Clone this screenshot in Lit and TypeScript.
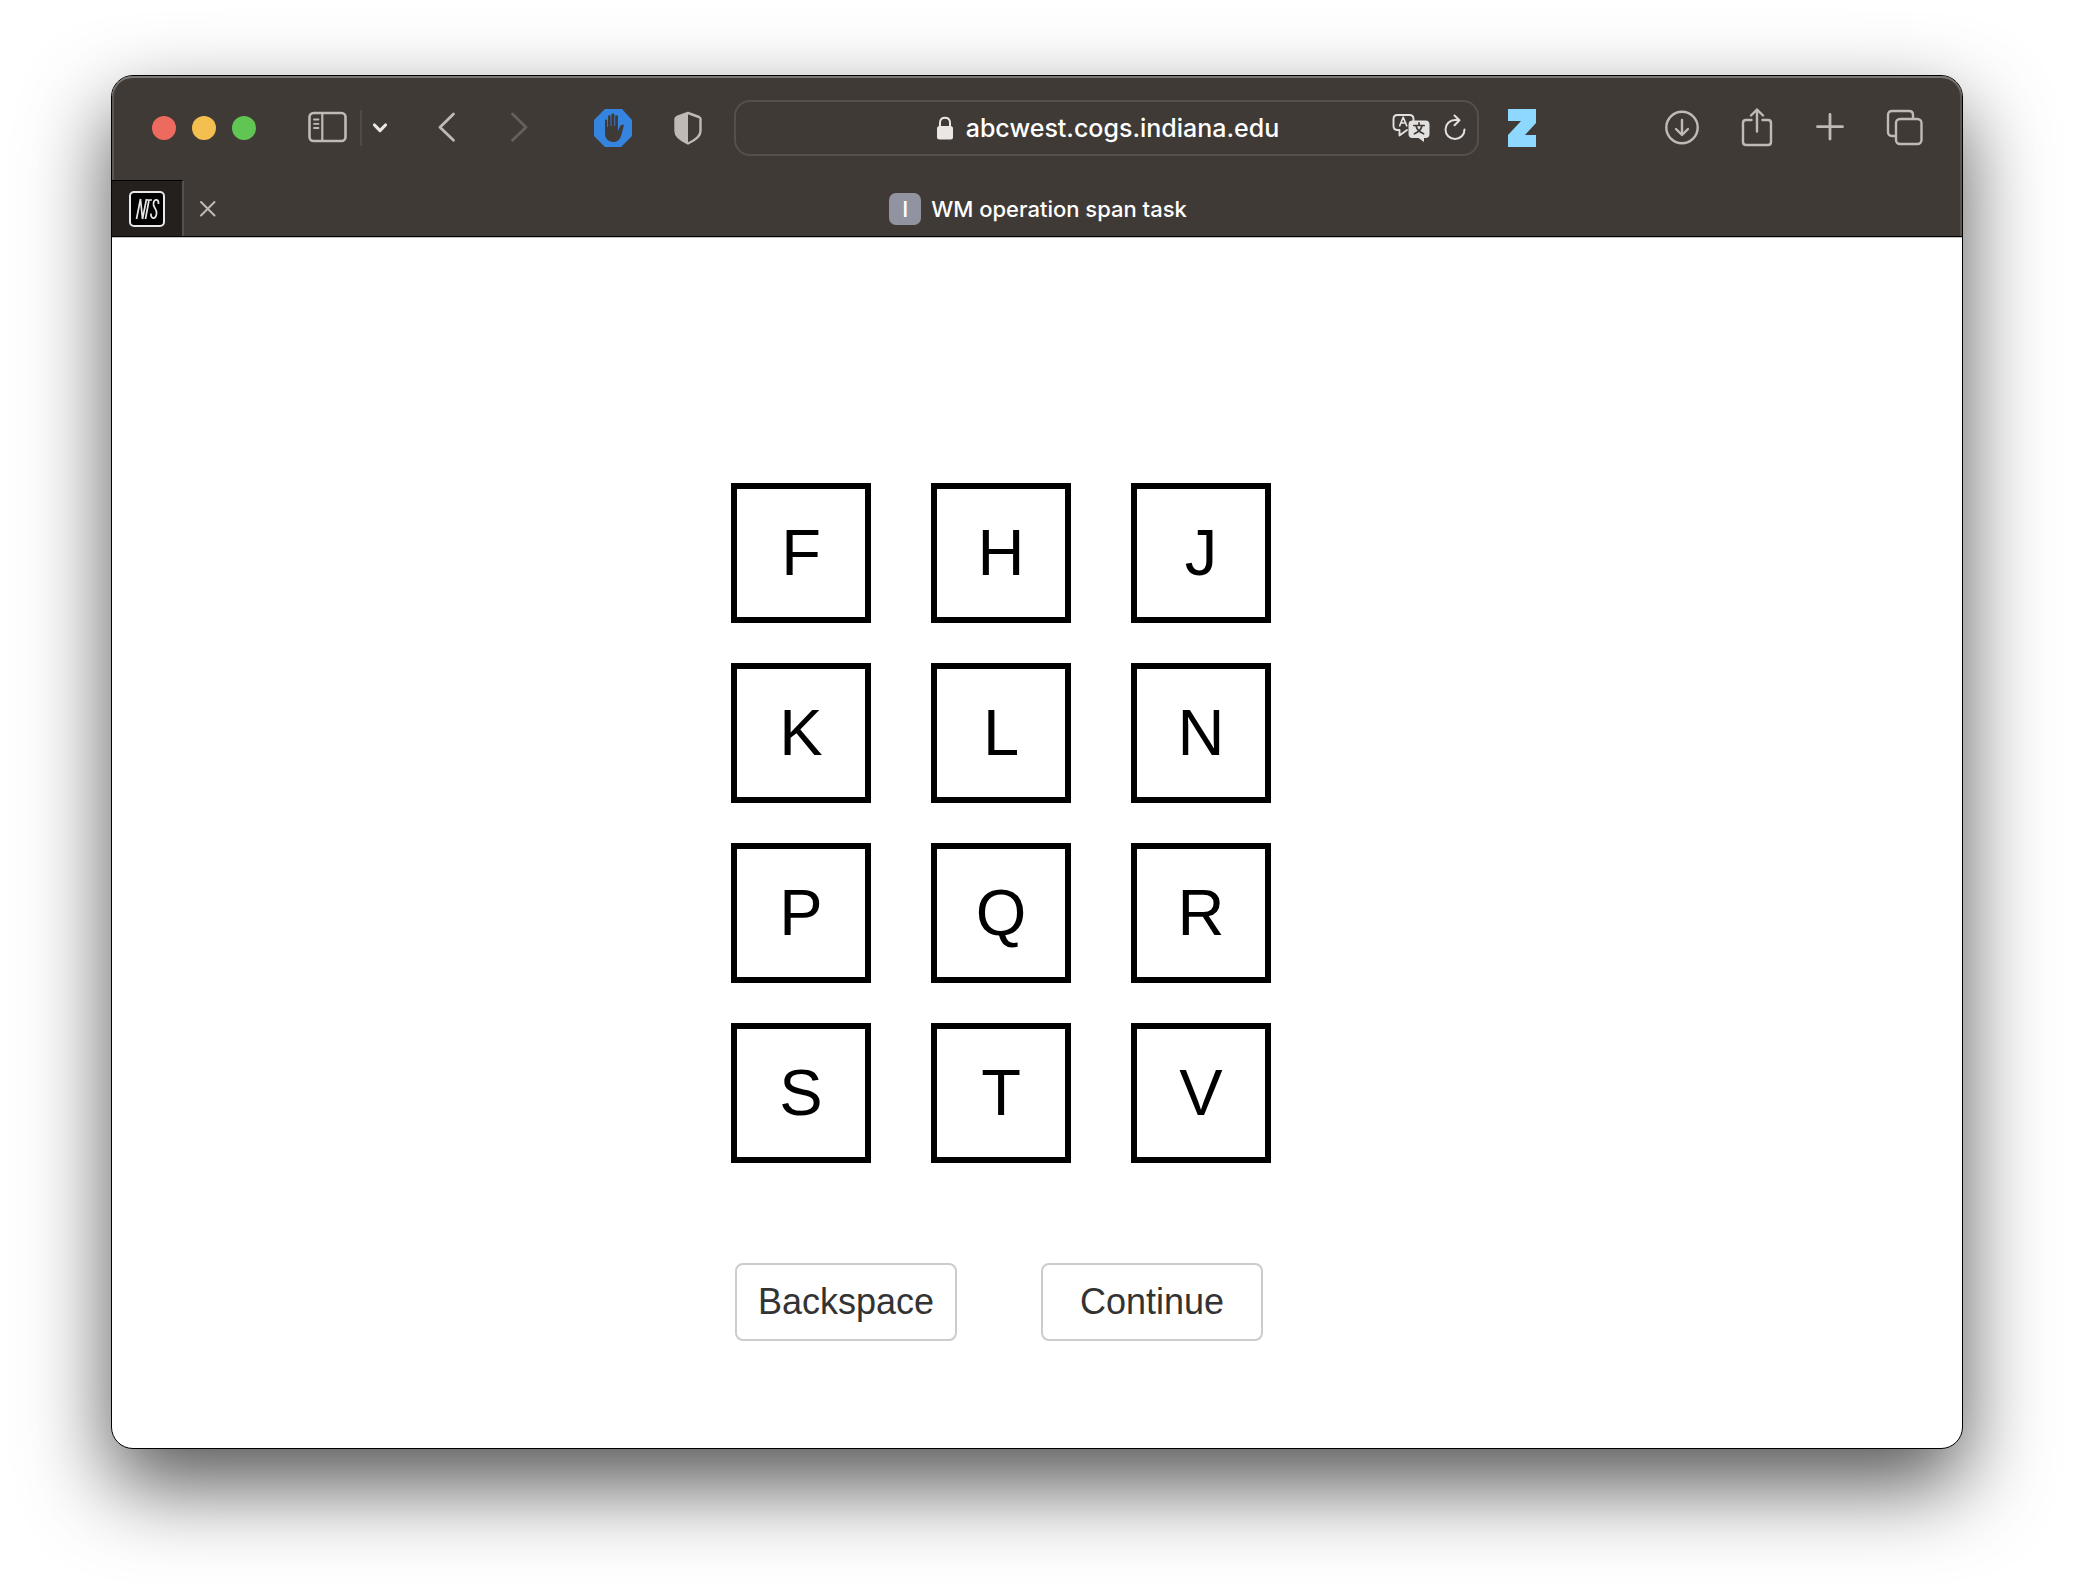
import { LitElement, html, css } from "lit";
import { customElement, property, state } from "lit/decorators.js";

const LETTERS = ["F", "H", "J", "K", "L", "N", "P", "Q", "R", "S", "T", "V"];

@customElement("browser-toolbar")
export class BrowserToolbar extends LitElement {
  @property() address = "";

  static styles = css`
    :host { display: block; }
    .bar {
      display: flex;
      align-items: center;
      height: 104px;
      padding: 0 38px 0 40px;
      box-sizing: border-box;
    }
    button {
      display: block;
      flex: none;
      margin: 0;
      padding: 0;
      border: 0;
      background: none;
      color: #bfbab6;
      line-height: 0;
    }
    svg { display: block; fill: none; stroke: currentColor; stroke-linecap: round; stroke-linejoin: round; }
    .solid { stroke: none; }
    .lights { display: flex; gap: 16px; flex: none; }
    .light { width: 24px; height: 24px; border-radius: 50%; }
    .close { background: #ed6a5e; }
    .minimise { background: #f5bf4f; }
    .zoom { background: #61c554; }
    .side { display: flex; align-items: center; margin-left: 52px; flex: none; }
    .rule { width: 2px; height: 36px; margin: 0 10px 0 12px; background: #504b47; }
    .pale { color: #eae7e5; }
    .history { display: flex; gap: 54px; margin-left: 50px; flex: none; }
    .faded { color: #65605c; }
    .extensions { display: flex; align-items: center; gap: 40px; margin: 0 31px 0 65px; flex: none; }
    .address {
      flex: 1;
      min-width: 0;
      height: 56px;
      box-sizing: border-box;
      display: grid;
      grid-template-columns: 1fr auto 1fr;
      align-items: center;
      border: 2px solid #55504c;
      border-radius: 16px;
      padding: 0 10px 0 12px;
    }
    .site { grid-column: 2; display: flex; align-items: center; gap: 12px; }
    .site a {
      color: #fff;
      text-decoration: none;
      font: 500 25px/32px Inter, "Liberation Sans", sans-serif;
    }
    .tools { display: flex; justify-content: flex-end; align-items: center; gap: 13px; }
    .tools button { color: #e3e1df; }
    .zed { margin: 0 127px 0 28px; }
    .actions { display: flex; align-items: center; gap: 40px; flex: none; }
  `;

  render() {
    return html`
      <header class="bar">
        <div class="lights">
          <button class="light close" aria-label="Close window"></button>
          <button class="light minimise" aria-label="Minimise window"></button>
          <button class="light zoom" aria-label="Zoom window"></button>
        </div>
        <div class="side">
          <button aria-label="Show sidebar">
            <svg width="40" height="34" viewBox="0 0 40 34" stroke-width="2.6">
              <rect x="1.5" y="2" width="36" height="28" rx="4" />
              <path d="M14.3 2v28" stroke-width="2.2" />
              <path d="M6 8.5h4.5M6 12.8h4.5M6 17h4.5" stroke-width="1.8" />
            </svg>
          </button>
          <span class="rule"></span>
          <button class="pale" aria-label="Tab groups">
            <svg width="16" height="12" viewBox="0 0 16 12" stroke-width="3.2"><path d="M2.5 3l5.5 5.6L13.5 3" /></svg>
          </button>
        </div>
        <nav class="history">
          <button aria-label="Back">
            <svg width="18" height="32" viewBox="0 0 18 32" stroke-width="2.8"><path d="M15.5 2L2 15.2l13.5 13" /></svg>
          </button>
          <button class="faded" aria-label="Forward" disabled>
            <svg width="18" height="32" viewBox="0 0 18 32" stroke-width="2.8"><path d="M2.5 2L16 15.2l-13.5 13" /></svg>
          </button>
        </nav>
        <div class="extensions">
          <button aria-label="Content blocker">
            <svg class="solid" width="40" height="38" viewBox="0 0 40 38">
              <path fill="#3584e0" d="M12 0h17l10 11v16L28 38H12L1 27V11z" />
              <path fill="#3f3a36" d="M12 11.5c0-1.5 2.2-1.5 2.2 0V18h.8V7.5c0-1.6 2.6-1.6 2.6 0V17h.8V5.8c0-1.7 3-1.7 3 0V17h.8V7.500c0-1.600 2.700-1.600 2.700 0V22.500l2-5c.7-1.700 2.500-2.300 4.100-1.500l-3 11c-1.300 4-4 6-7.500 6-5.500 0-8.500-3.500-8.500-9z" />
            </svg>
          </button>
          <button aria-label="Privacy report">
            <svg width="30" height="34" viewBox="0 0 30 34" stroke-width="2.4">
              <path d="M15 2l11 4q1.5.6 1.5 2v12c0 6-6 9.5-12.5 12.5C8.500 29.500 2.500 26 2.500 20V8q0-1.400 1.500-2z" />
              <path d="M15 2v30.500C8.500 29.500 2.500 26 2.500 20V8q0-1.400 1.500-2z" fill="currentColor" stroke="none" />
            </svg>
          </button>
        </div>
        <div class="address">
          <div class="site">
            <svg class="pale" width="18" height="24" viewBox="0 0 18 24" stroke-width="2">
              <rect x="1" y="10" width="16" height="13.5" rx="2.5" fill="currentColor" stroke="none" />
              <path d="M4 11V6.5c0-6.500 10-6.500 10 0V11" />
            </svg>
            <a href="#">${this.address}</a>
          </div>
          <div class="tools">
            <button aria-label="Translate page">
              <svg width="38" height="30" viewBox="0 0 38 30" stroke-width="1.9">
                <path d="M15 17l-7.500 5.500V17H5.500Q1.500 17 1.500 13V6q0-4 4-4h12q4 0 4 4v1.500" />
                <path d="M7.700 12.700l3.500-8.500 3.500 8.500M9 10h4.500" stroke-width="1.7" />
                <path d="M20.500 7.500h13q4 0 4 4v9.500q0 4-4 4H32v4l-5.500-4h-6q-4 0-4-4v-9.500q0-4 4-4z" fill="currentColor" stroke="none" />
                <path d="M27 9.800v2.400M21.800 12.500h10.400M30 12.800c-.8 3.500-3.600 6.500-7.600 8M24 12.800c.8 3.500 3.600 6.500 7.600 8" stroke="#3f3a36" stroke-width="1.7" />
              </svg>
            </button>
            <button aria-label="Reload page">
              <svg width="24" height="30" viewBox="0 0 24 30" stroke-width="2">
                <path d="M21.500 16.500a9.500 9.500 0 1 1-9.500-9.500h4M11.500 2.500l5 4.700-5 5" />
              </svg>
            </button>
          </div>
        </div>
        <button class="zed" aria-label="Save to library">
          <svg class="solid" width="30" height="38" viewBox="0 0 30 38">
            <path fill="#8ed8ff" d="M1 0h28v14L18 26h11v12H1V26l13-14H1z" />
          </svg>
        </button>
        <div class="actions">
          <button aria-label="Downloads">
            <svg width="36" height="38" viewBox="0 0 36 38" stroke-width="2.4">
              <circle cx="18" cy="18.5" r="15.7" />
              <path d="M18 11v14.500M12 20l6 6 6-6" />
            </svg>
          </button>
          <button aria-label="Share">
            <svg width="34" height="40" viewBox="0 0 34 40" stroke-width="2.4">
              <path d="M11.500 12H6q-3 0-3 3v19q0 3 3 3h22q3 0 3-3V15q0-3-3-3h-5.500M17 23.500V1.500M11 7.500l6-6 6 6" />
            </svg>
          </button>
          <button aria-label="New tab">
            <svg width="32" height="32" viewBox="0 0 32 32" stroke-width="2.8"><path d="M16 2.500v24.500M3.500 14.700h25" /></svg>
          </button>
          <button aria-label="Tab overview">
            <svg width="38" height="38" viewBox="0 0 38 38" stroke-width="2.4">
              <path d="M8.500 27H6q-4 0-4-4V6q0-4 4-4h17q4 0 4 4v2.500" />
              <rect x="10" y="10" width="25.5" height="25" rx="4" />
            </svg>
          </button>
        </div>
      </header>
    `;
  }
}

@customElement("browser-tabs")
export class BrowserTabs extends LitElement {
  @property() heading = "";

  static styles = css`
    :host { display: block; }
    .tabs {
      display: flex;
      height: 56px;
      color: #fff;
      font: 500 22px/28px Inter, "Liberation Sans", sans-serif;
    }
    button { margin: 0; padding: 0; border: 0; background: none; color: inherit; }
    svg { display: block; }
    .pinned {
      display: grid;
      place-items: center;
      width: 72px;
      box-sizing: border-box;
      border-top: 1px solid #000;
      border-right: 2px solid #55504c;
      background: #24201e;
      flex: none;
    }
    .current { flex: 1; display: grid; grid-template-columns: 72px 1fr 72px; align-items: center; padding-top: 2px; }
    .shut { justify-self: start; padding-left: 15px; color: #bfbab6; }
    .title { display: flex; align-items: center; justify-content: center; gap: 10px; padding-right: 70px; }
    .badge {
      display: grid;
      place-items: center;
      width: 32px;
      height: 32px;
      border-radius: 7px;
      background: #9293a0;
    }
  `;

  render() {
    return html`
      <div class="tabs" role="tablist">
        <button class="pinned" role="tab" aria-label="NTS">
          <svg width="36" height="36" viewBox="0 0 36 36" fill="none" stroke="#e8e8e8">
            <rect x="1" y="1" width="34" height="34" rx="4" fill="#000" stroke-width="2" />
            <path d="M7.500 28L11.500 8L13.500 28L17.500 8M16.500 9H23M20 9L16.500 28M29.500 13C30 8 25.500 7.500 24.500 12C23.500 17 28.500 17 27.500 23C26.700 28.500 21.500 28.500 22 22.500" stroke-width="1.7" />
          </svg>
        </button>
        <div class="current" role="tab" aria-selected="true">
          <button class="shut" aria-label="Close tab">
            <svg width="18" height="18" viewBox="0 0 18 18" fill="none" stroke="currentColor" stroke-width="2" stroke-linecap="round"><path d="M2 2l13.500 13.500M15.500 2L2 15.500" /></svg>
          </button>
          <div class="title"><span class="badge">I</span><span>${this.heading}</span></div>
        </div>
      </div>
    `;
  }
}

@customElement("letter-recall")
export class LetterRecall extends LitElement {
  @state() private picked: string[] = [];

  static styles = css`
    :host { display: block; }
    .page {
      display: flex;
      flex-direction: column;
      align-items: center;
      gap: 100px;
      padding: 245px 72px 107px 0;
      font-family: "Liberation Sans", Arial, sans-serif;
    }
    .letters { display: grid; grid-template-columns: repeat(3, 140px); gap: 40px 60px; }
    button { margin: 0; padding: 0; background: #fff; font-family: inherit; }
    .letter { height: 140px; border: 6px solid #000; color: #000; font-size: 65px; line-height: 128px; }
    .commands { display: flex; gap: 84px; padding-right: 4px; }
    .command {
      width: 222px;
      height: 78px;
      border: 2px solid #ccc;
      border-radius: 8px;
      color: #333;
      font-size: 36px;
      line-height: 72px;
    }
  `;

  render() {
    return html`
      <main class="page">
        <div class="letters">
          ${LETTERS.map((l) => html`<button class="letter" @click=${() => (this.picked = [...this.picked, l])}>${l}</button>`)}
        </div>
        <div class="commands">
          <button class="command" @click=${() => (this.picked = this.picked.slice(0, -1))}>Backspace</button>
          <button class="command">Continue</button>
        </div>
      </main>
    `;
  }
}

@customElement("app-root")
export class AppRoot extends LitElement {
  static styles = css`
    :host { display: block; padding: 75px 111px 147px; background: #fff; overflow: hidden; }
    .window {
      border: 1px solid #000;
      border-radius: 22px;
      background: #fff;
      box-shadow: 0 36px 84px rgba(0, 0, 0, 0.67);
    }
    .chrome {
      background: #3f3a36;
      border-bottom: 1px solid #000;
      border-radius: 21px 21px 0 0;
      box-shadow: inset 0 2px #7b7773, inset 2px 0 #5c5753, inset -2px 0 #5c5753, 0 1px #c4c4c4;
    }
    .view { padding-top: 1px; }
  `;

  render() {
    return html`
      <div class="window">
        <div class="chrome">
          <browser-toolbar address="abcwest.cogs.indiana.edu"></browser-toolbar>
          <browser-tabs heading="WM operation span task"></browser-tabs>
        </div>
        <letter-recall class="view"></letter-recall>
      </div>
    `;
  }
}
